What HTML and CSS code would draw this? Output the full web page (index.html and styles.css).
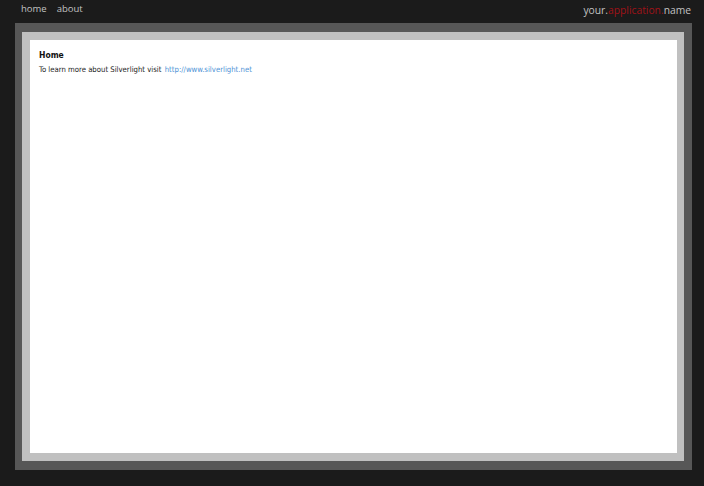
FILE: index.html
```html
<!DOCTYPE html>
<html>
<head>
<meta charset="utf-8">
<link rel="stylesheet" href="styles.css">
</head>
<body>
<div class="page">
  <header class="topbar">
    <nav class="nav">
      <a class="nav-link" href="#">home</a>
      <a class="nav-link" href="#">about</a>
    </nav>
    <div class="brand">your.<span class="brand-accent">application.</span>name</div>
  </header>
  <main class="frame">
    <div class="frame-inner">
      <div class="content">
        <h1 class="title">Home</h1>
        <p class="text">To learn more about Silverlight visit <a class="link" href="#">http://www.silverlight.net</a></p>
      </div>
    </div>
  </main>
</div>
</body>
</html>
```

FILE: styles.css
```css
html, body {
  margin: 0;
  padding: 0;
  height: 100%;
}
body {
  background: #1b1b1b;
  font-family: "DejaVu Sans Condensed", "DejaVu Sans", sans-serif;
}
.page {
  display: flex;
  flex-direction: column;
  height: 486px;
}
.topbar {
  height: 23px;
  display: flex;
  justify-content: space-between;
  align-items: flex-start;
  padding: 0 13px 0 21px;
}
.nav {
  display: flex;
  gap: 10px;
  padding-top: 3px;
}
.nav-link {
  color: #c2c2c2;
  text-decoration: none;
  font-family: "Open Sans", sans-serif;
  font-size: 9.5px;
  line-height: 12px;
}
.brand {
  color: #c2c2c2;
  font-family: "Open Sans", sans-serif;
  font-size: 10.3px;
  line-height: 14px;
  padding-top: 3px;
}
.brand-accent {
  color: #a01218;
}
.frame {
  flex: 1;
  margin: 0 12px 16px 15px;
  background: #575757;
  padding: 9px 8px 9px 7px;
  display: flex;
}
.frame-inner {
  flex: 1;
  background: #c0c0c0;
  padding: 8px 7px 8px 8px;
  display: flex;
}
.content {
  flex: 1;
  background: #ffffff;
  padding: 9px 9px;
}
.title {
  margin: 0;
  font-size: 8.5px;
  line-height: 12px;
  font-weight: bold;
  color: #111;
}
.text {
  margin: 3px 0 0;
  font-size: 7.7px;
  line-height: 11px;
  color: #222;
}
.link {
  color: #4f93d6;
  text-decoration: none;
  margin-left: 1px;
}
```
